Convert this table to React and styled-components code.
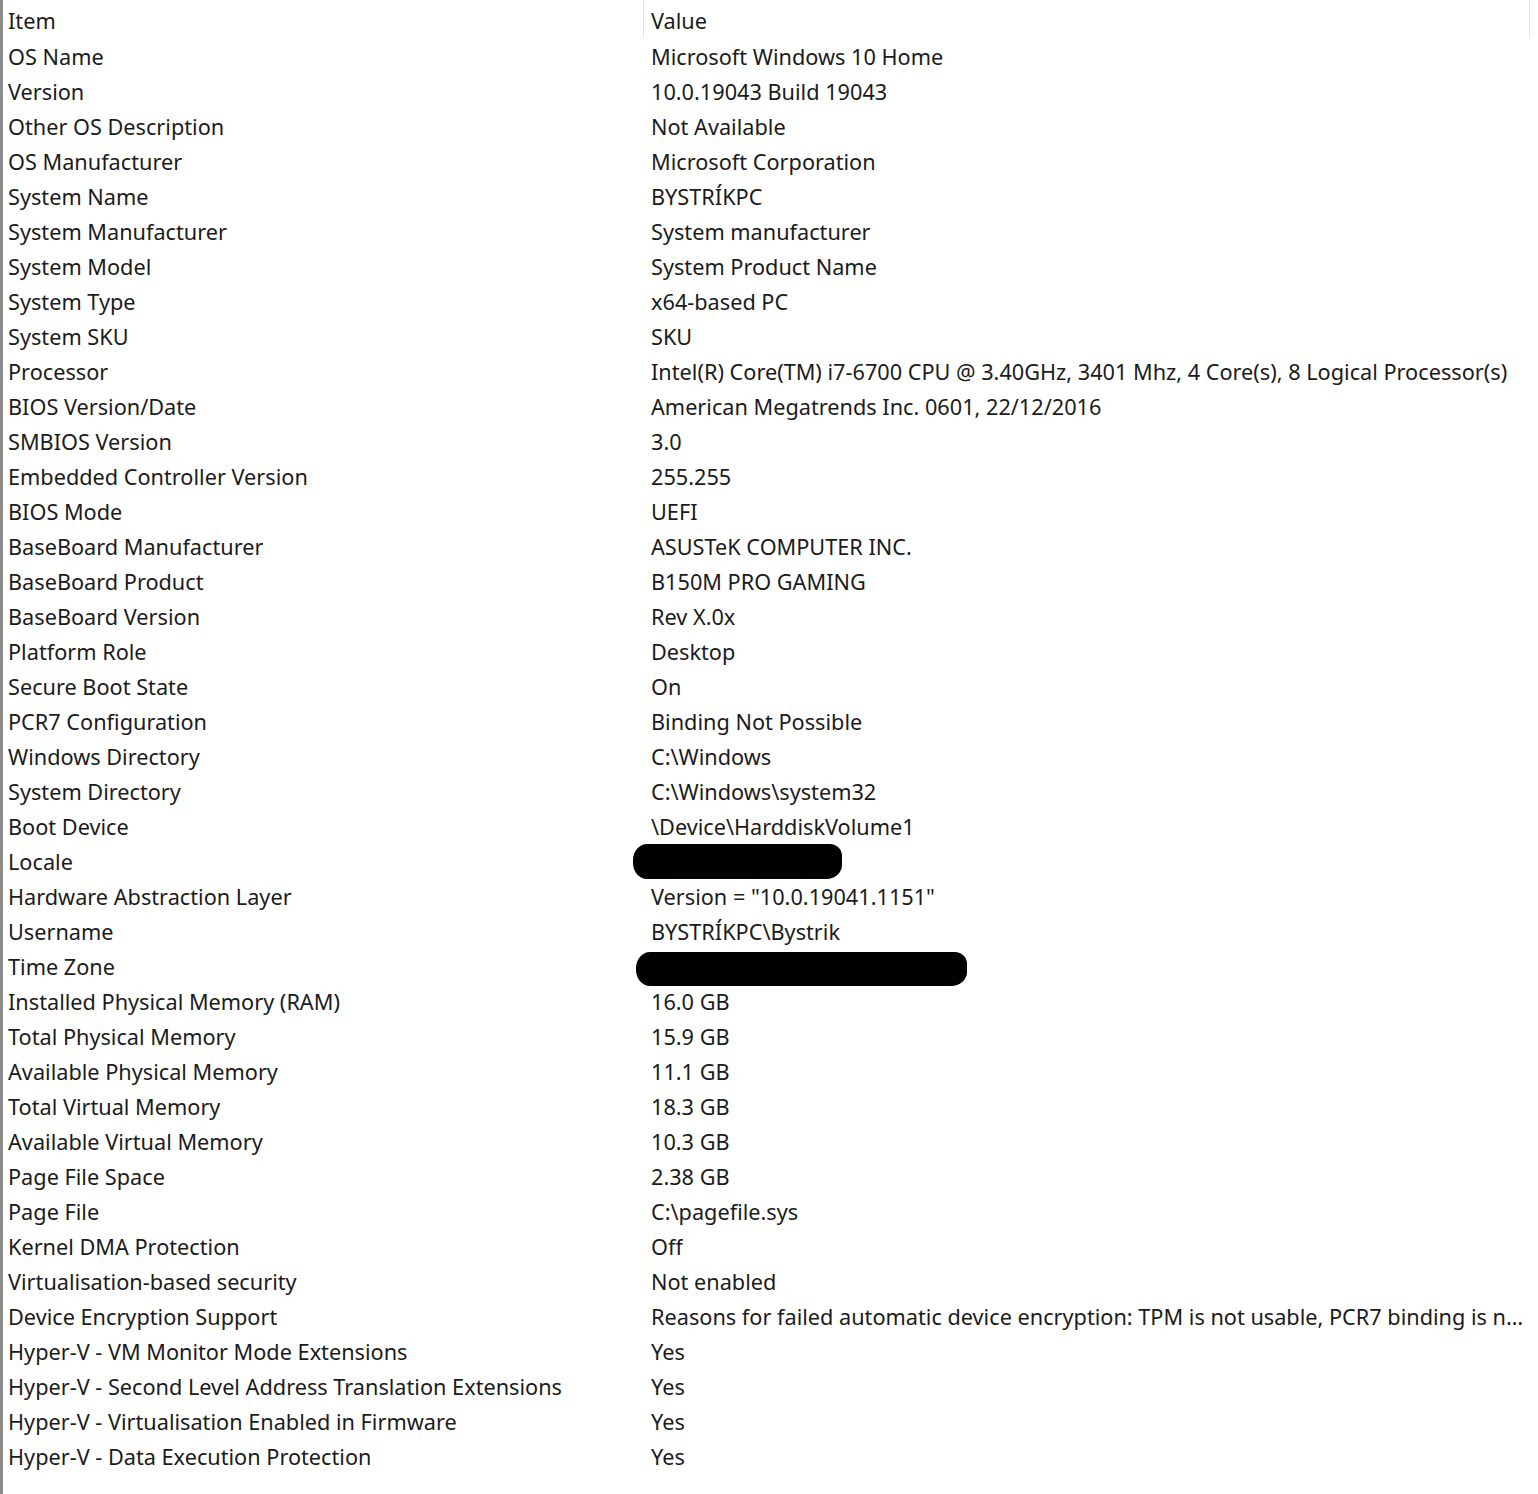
import React from 'react';
import styled, { createGlobalStyle } from 'styled-components';

const GlobalStyle = createGlobalStyle`
  html, body {
    margin: 0;
    padding: 0;
    background: #ffffff;
  }
  body {
    font-family: 'Noto Sans', 'Open Sans', sans-serif;
    color: #1b1b1b;
  }
`;

const Frame = styled.div`
  width: 1538px;
  min-height: 1494px;
  border-left: 3px solid #8c8c8c;
  box-sizing: border-box;
  background: #fff;
`;

const Grid = styled.div`
  display: grid;
  grid-template-columns: 641px 886px 1fr;
`;

const HeadCell = styled.div`
  height: 38px;
  display: flex;
  align-items: center;
  padding-top: 2px;
  box-sizing: border-box;
  padding-left: ${p => (p.$value ? '7px' : '5px')};
  border-right: ${p => (p.$last ? 'none' : '1px solid #e5e5e5')};
  font-size: 21.7px;
  white-space: nowrap;
  overflow: hidden;
`;

const Cell = styled.div`
  height: 35px;
  display: flex;
  align-items: center;
  padding-top: 2px;
  box-sizing: border-box;
  padding-left: ${p => (p.$value ? '7px' : '5px')};
  padding-right: 2px;
  font-size: 21.7px;
  white-space: nowrap;
  min-width: 0;
`;

const Text = styled.span`
  overflow: hidden;
  text-overflow: ellipsis;
  white-space: nowrap;
`;

const Redacted = styled.span`
  display: block;
  flex: none;
  height: ${p => p.$h}px;
  width: ${p => p.$w}px;
  margin-left: ${p => p.$x}px;
  margin-top: ${p => p.$y}px;
  background: #000;
  border-radius: 14px 12px 16px 14px / 16px 12px 14px 16px;
`;

const rows = [
  ['OS Name', 'Microsoft Windows 10 Home'],
  ['Version', '10.0.19043 Build 19043'],
  ['Other OS Description', 'Not Available'],
  ['OS Manufacturer', 'Microsoft Corporation'],
  ['System Name', 'BYSTRÍKPC'],
  ['System Manufacturer', 'System manufacturer'],
  ['System Model', 'System Product Name'],
  ['System Type', 'x64-based PC'],
  ['System SKU', 'SKU'],
  ['Processor', 'Intel(R) Core(TM) i7-6700 CPU @ 3.40GHz, 3401 Mhz, 4 Core(s), 8 Logical Processor(s)'],
  ['BIOS Version/Date', 'American Megatrends Inc. 0601, 22/12/2016'],
  ['SMBIOS Version', '3.0'],
  ['Embedded Controller Version', '255.255'],
  ['BIOS Mode', 'UEFI'],
  ['BaseBoard Manufacturer', 'ASUSTeK COMPUTER INC.'],
  ['BaseBoard Product', 'B150M PRO GAMING'],
  ['BaseBoard Version', 'Rev X.0x'],
  ['Platform Role', 'Desktop'],
  ['Secure Boot State', 'On'],
  ['PCR7 Configuration', 'Binding Not Possible'],
  ['Windows Directory', 'C:\\Windows'],
  ['System Directory', 'C:\\Windows\\system32'],
  ['Boot Device', '\\Device\\HarddiskVolume1'],
  ['Locale', { redact: true, x: -18, y: 0, w: 209, h: 35 }],
  ['Hardware Abstraction Layer', 'Version = "10.0.19041.1151"'],
  ['Username', 'BYSTRÍKPC\\Bystrik'],
  ['Time Zone', { redact: true, x: -15, y: 4, w: 331, h: 34 }],
  ['Installed Physical Memory (RAM)', '16.0 GB'],
  ['Total Physical Memory', '15.9 GB'],
  ['Available Physical Memory', '11.1 GB'],
  ['Total Virtual Memory', '18.3 GB'],
  ['Available Virtual Memory', '10.3 GB'],
  ['Page File Space', '2.38 GB'],
  ['Page File', 'C:\\pagefile.sys'],
  ['Kernel DMA Protection', 'Off'],
  ['Virtualisation-based security', 'Not enabled'],
  ['Device Encryption Support', 'Reasons for failed automatic device encryption: TPM is not usable, PCR7 binding is not supported, Hardware Security Test Interface failed and device is not Modern Standby'],
  ['Hyper-V - VM Monitor Mode Extensions', 'Yes'],
  ['Hyper-V - Second Level Address Translation Extensions', 'Yes'],
  ['Hyper-V - Virtualisation Enabled in Firmware', 'Yes'],
  ['Hyper-V - Data Execution Protection', 'Yes'],
];

export default function App() {
  return (
    <>
      <GlobalStyle />
      <Frame>
        <Grid>
          <HeadCell>Item</HeadCell>
          <HeadCell $value>Value</HeadCell>
          <HeadCell $last />
          {rows.map(([item, value]) => (
            <React.Fragment key={item}>
              <Cell>
                <Text>{item}</Text>
              </Cell>
              <Cell $value>
                {typeof value === 'object' ? (
                  <Redacted $x={value.x} $y={value.y} $w={value.w} $h={value.h} />
                ) : (
                  <Text>{value}</Text>
                )}
              </Cell>
              <Cell />
            </React.Fragment>
          ))}
        </Grid>
      </Frame>
    </>
  );
}
